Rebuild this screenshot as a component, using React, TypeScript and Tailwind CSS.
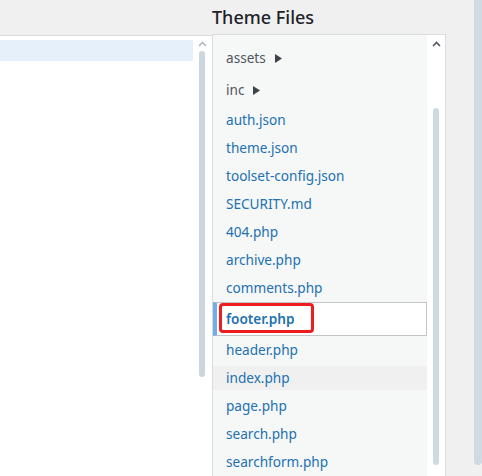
import type { ReactNode } from "react";

const font = { fontFamily: "'Noto Sans', 'Open Sans', sans-serif" };

type FileItem = { name: string; folder?: boolean; selected?: boolean; hover?: boolean };

const files: FileItem[] = [
  { name: "assets", folder: true },
  { name: "inc", folder: true },
  { name: "auth.json" },
  { name: "theme.json" },
  { name: "toolset-config.json" },
  { name: "SECURITY.md" },
  { name: "404.php" },
  { name: "archive.php" },
  { name: "comments.php" },
  { name: "footer.php", selected: true },
  { name: "header.php" },
  { name: "index.php", hover: true },
  { name: "page.php" },
  { name: "search.php" },
  { name: "searchform.php" },
];

function Chevron({ color }: { color: string }) {
  return (
    <svg width="9" height="6" viewBox="0 0 9 6" aria-hidden>
      <polyline points="1,5 4.5,1.5 8,5" fill="none" stroke={color} strokeWidth="1.6" />
    </svg>
  );
}

function Caret() {
  return (
    <svg width="7" height="9" viewBox="0 0 7 9" className="ml-[9px]" aria-hidden>
      <polygon points="0,0 7,4.5 0,9" fill="#3c434a" />
    </svg>
  );
}

function Row({ item }: { item: FileItem }): ReactNode {
  if (item.folder) {
    return (
      <li className="h-8 flex items-center pl-[13px] text-[13.6px] text-[#50575e]">
        <span>{item.name}</span>
        <Caret />
      </li>
    );
  }
  if (item.selected) {
    return (
      <li className="h-[34px] flex items-center bg-white border-y border-r border-[#c3c4c7] border-l-4 border-l-[#72aee6] pl-[9px] relative">
        <span className="text-[13.6px] font-semibold text-[#2271b1]">{item.name}</span>
        <span className="absolute left-[2px] top-0 w-[95px] h-[30px] border-[3px] border-[#ee1c1c] rounded-[4px]" />
      </li>
    );
  }
  return (
    <li className="h-7 flex items-center">
      <span
        className={`h-6 w-full flex items-center pl-[13px] text-[13.6px] text-[#2271b1] ${
          item.hover ? "bg-[#f0f0f1]" : ""
        }`}
      >
        {item.name}
      </span>
    </li>
  );
}

export default function App() {
  return (
    <div className="w-[482px] h-[476px] overflow-hidden bg-[#f0f0f1] flex" style={font}>
      {/* left editor box */}
      <div className="w-[212px] pt-[35px] shrink-0">
        <div className="h-full bg-white border-t border-[#dcdcde] flex">
          <div className="w-[193px] pt-[4px]">
            <div className="h-[21px] bg-[#e6f0fb]" />
          </div>
          <div className="w-[18px] flex flex-col items-center pt-[5px]">
            <Chevron color="#b4b9be" />
            <div className="mt-[4px] w-[6px] h-[326px] rounded-full bg-[#cdd6df]" />
          </div>
        </div>
      </div>

      {/* theme files column */}
      <div className="w-[234px] shrink-0 flex flex-col">
        <h2 className="h-[35px] flex items-center text-[18px] font-medium text-[#1d2327] leading-none">
          Theme Files
        </h2>
        <div className="flex-1 border-t border-l border-r border-[#dcdcde] flex">
          <ul className="w-[214px] bg-[#f6f7f7] pt-[7px]">
            {files.map((f) => (
              <Row key={f.name} item={f} />
            ))}
          </ul>
          <div className="w-[18px] bg-white flex flex-col items-center pt-[6px]">
            <Chevron color="#50575e" />
            <div className="mt-[61px] w-[6px] h-[357px] rounded-full bg-[#cfd9e2]" />
          </div>
        </div>
      </div>

      {/* page scrollbar */}
      <div className="flex-1 flex justify-end">
        <div className="w-[8px] h-[465px] rounded-b-full bg-[#d0dae3]" />
      </div>
    </div>
  );
}
